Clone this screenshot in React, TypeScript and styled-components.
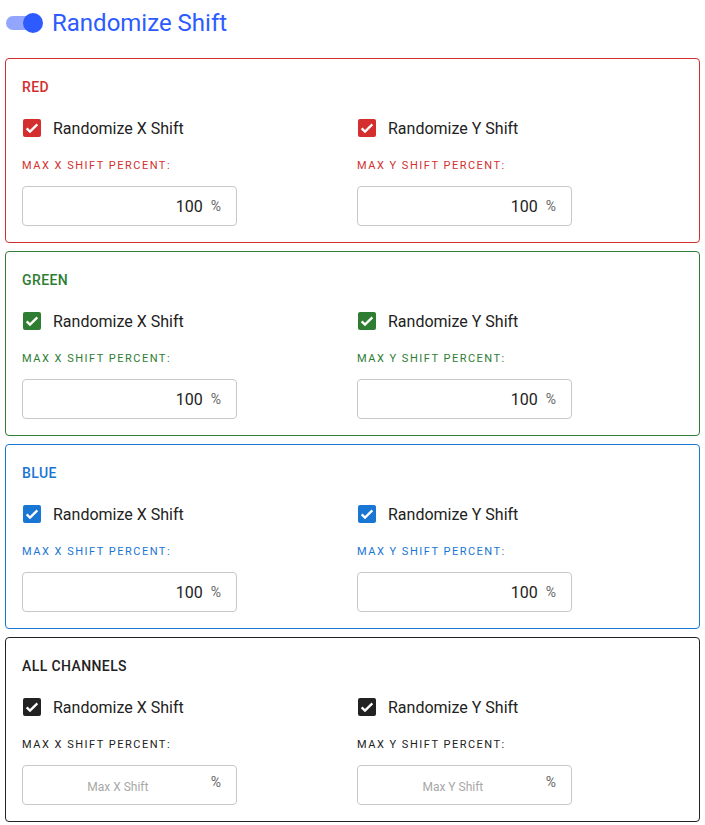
import React, { useState } from 'react';
import styled, { createGlobalStyle } from 'styled-components';

const GlobalStyle = createGlobalStyle`
  body {
    margin: 0;
    background: #ffffff;
    font-family: Roboto, "Liberation Sans", Arial, sans-serif;
  }
`;

const Page = styled.div`
  width: 695px;
  padding: 0 5px 6px 5px;
  display: flex;
  flex-direction: column;
  gap: 8px;
`;

const Header = styled.div`
  display: flex;
  align-items: center;
  height: 45px;
  padding-left: 1px;
  margin-bottom: 5px;
`;

const Track = styled.button<{ on: boolean }>`
  position: relative;
  width: 34px;
  height: 14px;
  border-radius: 7px;
  border: none;
  padding: 0;
  background: ${(p) => (p.on ? '#92a6ff' : '#bdbdbd')};
  cursor: pointer;
  margin-right: 12px;
`;

const Knob = styled.span<{ on: boolean }>`
  position: absolute;
  top: -3px;
  left: ${(p) => (p.on ? '17px' : '-3px')};
  width: 20px;
  height: 20px;
  border-radius: 50%;
  background: ${(p) => (p.on ? '#2d5bff' : '#fafafa')};
`;

const HeaderTitle = styled.span`
  font-size: 24px;
  color: #2d5bff;
  line-height: 1;
`;

const Card = styled.section<{ tone: string }>`
  border: 1px solid ${(p) => p.tone};
  border-radius: 4px;
  padding: 18px 16px 16px 16px;
  display: flex;
  flex-direction: column;
`;

const CardTitle = styled.div<{ tone: string }>`
  color: ${(p) => p.tone};
  font-size: 14px;
  font-weight: 500;
  letter-spacing: 0.4px;
  line-height: 20px;
  text-transform: uppercase;
`;

const Columns = styled.div`
  display: grid;
  grid-template-columns: 335px 1fr;
  margin-top: 19px;
`;

const Column = styled.div`
  display: flex;
  flex-direction: column;
`;

const CheckRow = styled.label`
  display: flex;
  align-items: center;
  height: 24px;
  cursor: pointer;
`;

const Box = styled.span<{ tone: string; checked: boolean }>`
  width: 18px;
  height: 18px;
  margin-left: 1px;
  border-radius: 2px;
  box-sizing: border-box;
  background: ${(p) => (p.checked ? p.tone : 'transparent')};
  border: ${(p) => (p.checked ? 'none' : `2px solid ${p.tone}`)};
  display: flex;
  align-items: center;
  justify-content: center;
  margin-right: 12px;
`;

const CheckLabel = styled.span`
  font-size: 16px;
  color: #222222;
`;

const FieldLabel = styled.div<{ tone: string }>`
  margin-top: 18px;
  font-size: 11px;
  line-height: 16px;
  letter-spacing: 1.5px;
  text-transform: uppercase;
  color: ${(p) => p.tone};
`;

const InputBox = styled.div`
  margin-top: 12px;
  width: 215px;
  height: 40px;
  box-sizing: border-box;
  border: 1px solid #c8c8c8;
  border-radius: 4px;
  display: flex;
  align-items: center;
  padding: 0 15px 0 10px;
`;

const NumberInput = styled.input<{ empty: boolean }>`
  flex: 1;
  min-width: 0;
  border: none;
  outline: none;
  background: transparent;
  font-family: inherit;
  font-size: 16px;
  color: #222222;
  text-align: ${(p) => (p.empty ? 'center' : 'right')};
  padding: 0 8px 0 0;
  &::placeholder {
    font-size: 12px;
    color: #a8a8a8;
  }
`;

const Unit = styled.span<{ raised: boolean }>`
  font-size: 14px;
  color: #666666;
  margin-top: ${(p) => (p.raised ? '-6px' : '0')};
`;

interface Channel {
  name: string;
  tone: string;
  value: string;
}

const channels: Channel[] = [
  { name: 'Red', tone: '#d32f2f', value: '100' },
  { name: 'Green', tone: '#2e7d32', value: '100' },
  { name: 'Blue', tone: '#1976d2', value: '100' },
  { name: 'All Channels', tone: '#222222', value: '' },
];

function Check({ tone, checked }: { tone: string; checked: boolean }) {
  return (
    <Box tone={tone} checked={checked}>
      {checked && (
        <svg width="16" height="16" viewBox="0 0 24 24">
          <path d="M4 12.5l5 5L20 6.5" fill="none" stroke="#fff" strokeWidth="3.4" />
        </svg>
      )}
    </Box>
  );
}

function AxisColumn({ axis, channel }: { axis: 'X' | 'Y'; channel: Channel }) {
  const [checked, setChecked] = useState(true);
  const [value, setValue] = useState(channel.value);
  return (
    <Column>
      <CheckRow onClick={() => setChecked(!checked)}>
        <Check tone={channel.tone} checked={checked} />
        <CheckLabel>Randomize {axis} Shift</CheckLabel>
      </CheckRow>
      <FieldLabel tone={channel.tone}>Max {axis} Shift Percent:</FieldLabel>
      <InputBox>
        <NumberInput
          empty={value === ''}
          value={value}
          placeholder={`Max ${axis} Shift`}
          onChange={(e) => setValue(e.target.value)}
        />
        <Unit raised={value === ''}>%</Unit>
      </InputBox>
    </Column>
  );
}

function ChannelCard({ channel }: { channel: Channel }) {
  return (
    <Card tone={channel.tone}>
      <CardTitle tone={channel.tone}>{channel.name}</CardTitle>
      <Columns>
        <AxisColumn axis="X" channel={channel} />
        <AxisColumn axis="Y" channel={channel} />
      </Columns>
    </Card>
  );
}

export default function App() {
  const [on, setOn] = useState(true);
  return (
    <>
      <GlobalStyle />
      <Page>
        <Header>
          <Track on={on} onClick={() => setOn(!on)}>
            <Knob on={on} />
          </Track>
          <HeaderTitle>Randomize Shift</HeaderTitle>
        </Header>
        {channels.map((c) => (
          <ChannelCard key={c.name} channel={c} />
        ))}
      </Page>
    </>
  );
}
